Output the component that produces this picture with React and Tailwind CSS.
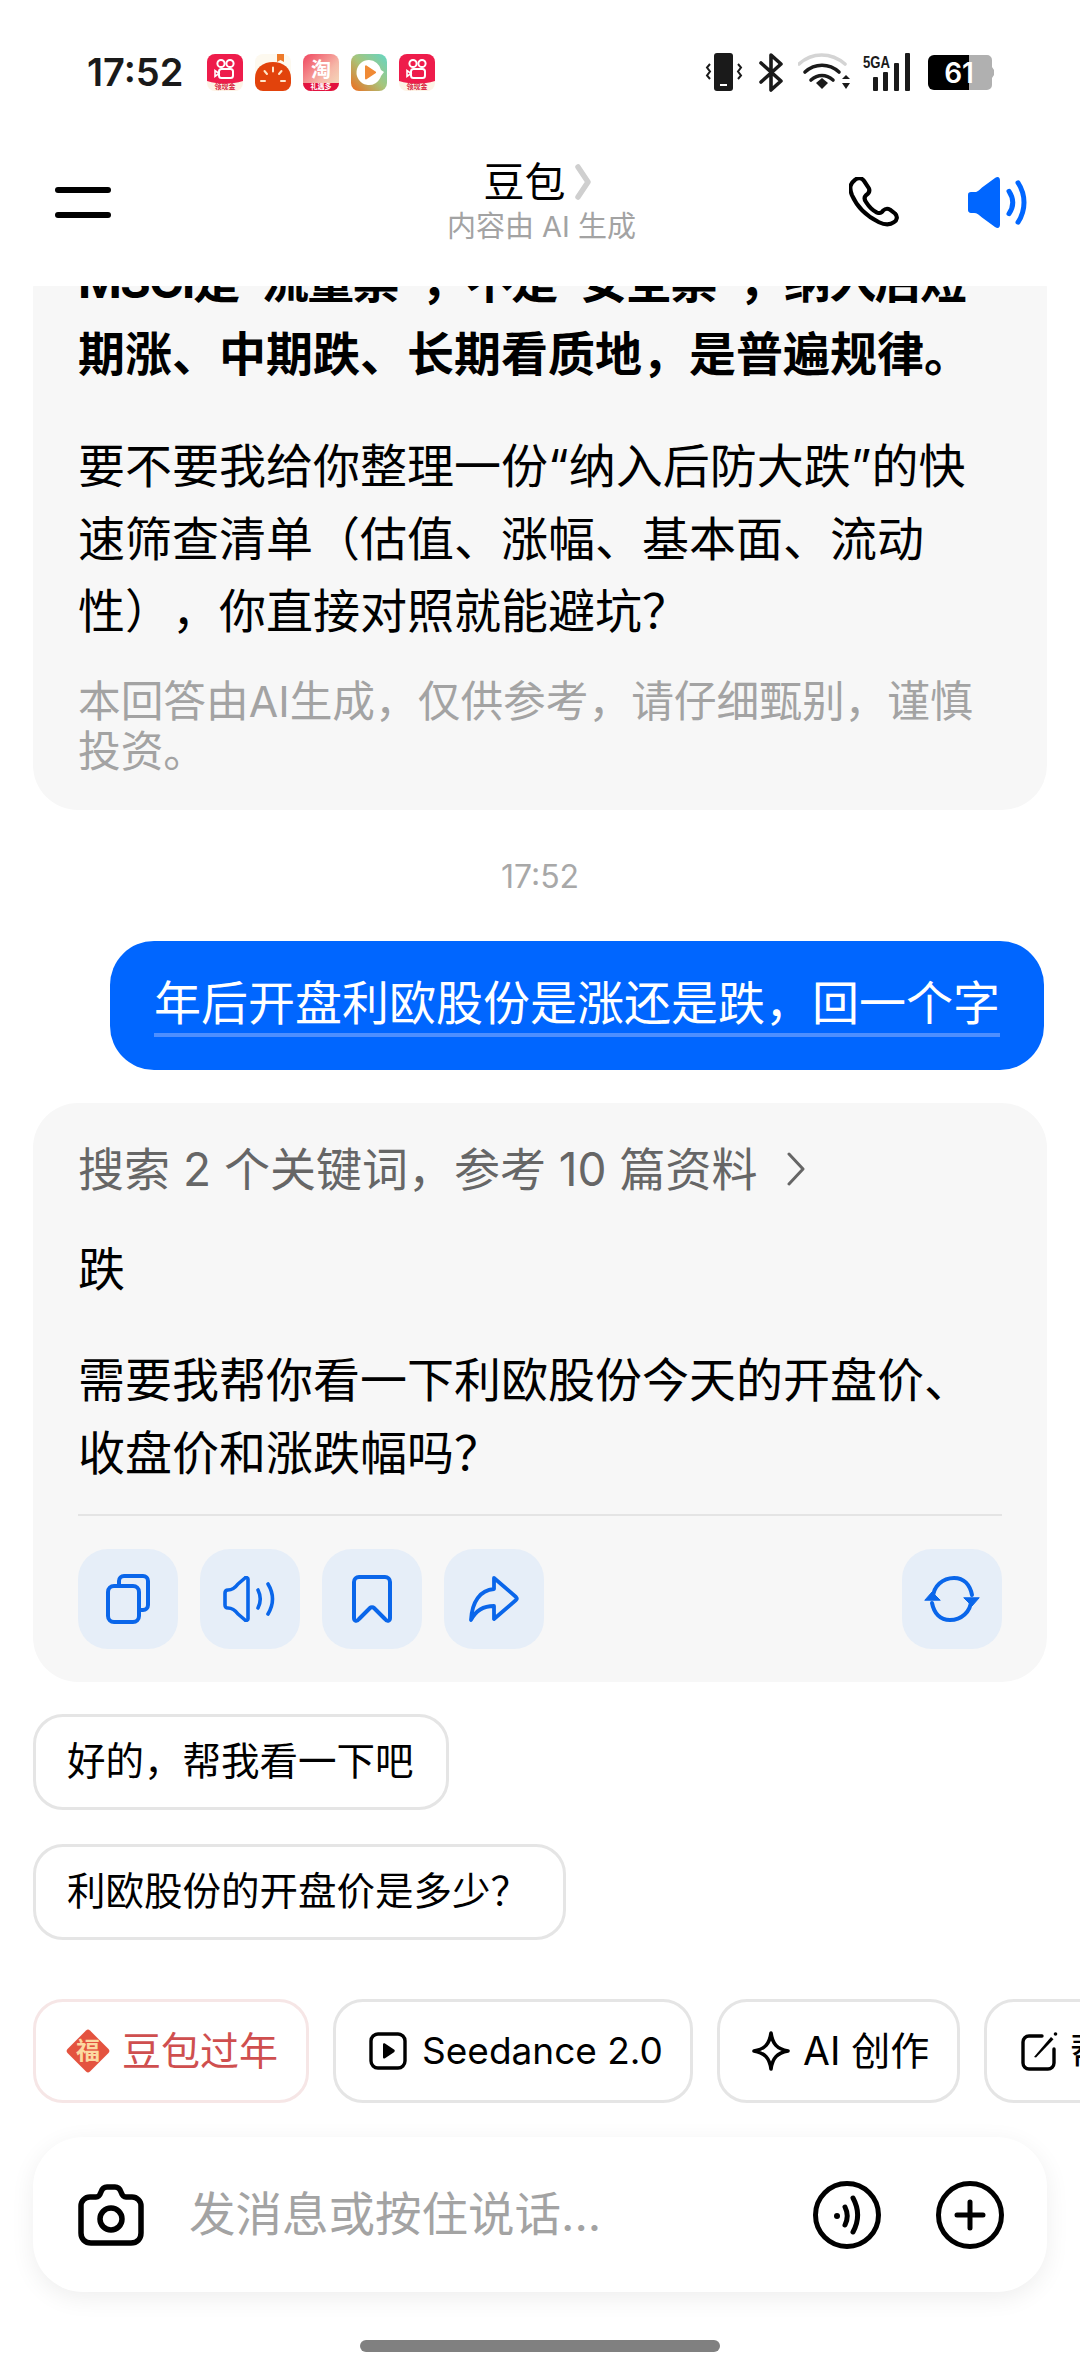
import React from 'react';

const KuaishouIcon = () => (
  <svg width="36" height="37" viewBox="0 0 36 37">
    <rect width="36" height="37" rx="8" fill="#fdf3e6" />
    <path d="M0 8a8 8 0 0 1 8-8h20a8 8 0 0 1 8 8v19c-6 2-12 2.500-18 2.500S6 29 0 27z" fill="#ee1c4b" />
    <circle cx="14" cy="9.500" r="3.600" fill="none" stroke="#fff" strokeWidth="2" />
    <circle cx="23" cy="9.500" r="3.600" fill="none" stroke="#fff" strokeWidth="2" />
    <rect x="12" y="15" width="14" height="9" rx="2.500" fill="none" stroke="#fff" strokeWidth="2" />
    <path d="M12 19.500l-4-3v6z" fill="none" stroke="#fff" strokeWidth="1.600" />
    <text x="18" y="35" textAnchor="middle" fontSize="7" fontWeight="700" fill="#d81e3f" fontFamily="'Noto Sans CJK SC', sans-serif">领现金</text>
  </svg>
);

const TomatoIcon = () => (
  <svg width="36" height="37" viewBox="0 0 36 37">
    <rect width="36" height="37" rx="8" fill="#fdf9ef" />
    <path d="M22 0h7v8l-3.500-2L22 8z" fill="#ee7a2a" />
    <path d="M0 24C0 14 8 8 18 8s18 6 18 16v5a8 8 0 0 1-8 8H8a8 8 0 0 1-8-8z" fill="#e2430c" />
    <path d="M18 13.500v4M9.500 17l2.500 3M26.500 17L24 20M6 27h4M26 27h4" stroke="#ffe6c9" strokeWidth="2" strokeLinecap="round" />
  </svg>
);

const TaobaoIcon = () => (
  <svg width="36" height="37" viewBox="0 0 36 37">
    <defs>
      <linearGradient id="tb" x1="0" y1="0" x2="1" y2="1">
        <stop offset="0" stopColor="#f0455f" />
        <stop offset="0.6" stopColor="#f6b7a8" />
        <stop offset="1" stopColor="#f3e3c0" />
      </linearGradient>
    </defs>
    <rect width="36" height="37" rx="8" fill="url(#tb)" />
    <path d="M0 29h36a8 8 0 0 1-8 8H8a8 8 0 0 1-8-8z" fill="#e2123f" />
    <text x="18" y="23" textAnchor="middle" fontSize="20" fontWeight="700" fill="#fff" fontFamily="'Noto Sans CJK SC', sans-serif">淘</text>
    <text x="18" y="35" textAnchor="middle" fontSize="7" fontWeight="700" fill="#fff" fontFamily="'Noto Sans CJK SC', sans-serif">礼遇多</text>
  </svg>
);

const VideoIcon = () => (
  <svg width="36" height="37" viewBox="0 0 36 37">
    <defs>
      <linearGradient id="vd" x1="1" y1="0" x2="0" y2="1">
        <stop offset="0" stopColor="#63d6c4" />
        <stop offset="0.5" stopColor="#a8c47a" />
        <stop offset="1" stopColor="#f06a1c" />
      </linearGradient>
    </defs>
    <rect width="36" height="37" rx="8" fill="url(#vd)" />
    <path d="M18 6a12.500 12.500 0 1 0 12 16l3-4-3-2A12.500 12.500 0 0 0 18 6z" fill="#fff" />
    <path d="M14 12.500a1 1 0 0 1 1.500-1l9 6a1 1 0 0 1 0 1.800l-9 6a1 1 0 0 1-1.500-1z" fill="#f08a35" />
  </svg>
);

const StatusIcons = () => (
  <div className="flex items-center">
    {/* vibrate */}
    <svg width="38" height="38" viewBox="0 0 38 38" className="mr-[16px]">
      <rect x="9" y="0" width="19" height="38" rx="3" fill="#1a1a1a" />
      <rect x="15" y="31" width="7" height="2" fill="#fff" />
      <path d="M5 11l-3 3.500 3 4-3 4 3 3.500M33 11l3 3.500-3 4 3 4-3 3.500" fill="none" stroke="#1a1a1a" strokeWidth="2" />
    </svg>
    {/* bluetooth */}
    <svg width="24" height="39" viewBox="0 0 24 39" className="mr-[15px]">
      <path d="M2 10l20 18-10 9V2l10 9L2 29" fill="none" stroke="#1a1a1a" strokeWidth="3.600" strokeLinejoin="round" strokeLinecap="round" />
    </svg>
    {/* wifi */}
    <svg width="52" height="38" viewBox="0 0 52 38" className="mr-[13px]">
      <path d="M1 11C14-1 33-1 47 11" fill="none" stroke="#d4d4d4" strokeWidth="3.600" strokeLinecap="round" />
      <path d="M7 19c10-9 24-9 34 0" fill="none" stroke="#1a1a1a" strokeWidth="3.600" strokeLinecap="round" />
      <path d="M13 27c7-6 15-6 22 0" fill="none" stroke="#1a1a1a" strokeWidth="3.600" strokeLinecap="round" />
      <path d="M18 30l6-5 6 5-6 6z" fill="#1a1a1a" />
      <path d="M44 26l4-4 4 4zM44 30l4 6 4-6z" fill="#1a1a1a" />
    </svg>
    {/* 5GA signal */}
    <svg width="48" height="38" viewBox="0 0 48 38" className="mr-[17px]">
      <text x="0" y="15" fontSize="16" fontWeight="700" fill="#1a1a1a" fontFamily="'Liberation Sans', sans-serif" textLength="27" lengthAdjust="spacingAndGlyphs">5GA</text>
      <rect x="10" y="24" width="5" height="14" rx="1" fill="#1a1a1a" />
      <rect x="20" y="19" width="5" height="19" rx="1" fill="#1a1a1a" />
      <rect x="31" y="10" width="5" height="28" rx="1" fill="#1a1a1a" />
      <rect x="42" y="0" width="5" height="38" rx="1" fill="#1a1a1a" />
    </svg>
    {/* battery */}
    <svg width="66" height="35" viewBox="0 0 66 35">
      <path d="M41 0h18a5 5 0 0 1 5 5v7l2 3v5l-2 3v7a5 5 0 0 1-5 5H41z" fill="#b0b0b0" />
      <path d="M6 0h35v35H6a6 6 0 0 1-6-6V6a6 6 0 0 1 6-6z" fill="#000" />
      <text x="31" y="28" textAnchor="middle" fontSize="28" fontWeight="600" fill="#fff" fontFamily="Inter, sans-serif">61</text>
    </svg>
  </div>
);

const PhoneIcon = () => (
  <svg width="50" height="50" viewBox="0 0 50 52" preserveAspectRatio="none">
    <path d="M6 3C9 0 13 1 15 4l5 8c1 3 0 5-3 7-2 2-2 4 0 7 3 5 7 9 11 11 3 1 5 0 6-2 2-2 4-3 7-1l5 4c3 3 2 7-1 9-4 3-9 3-15 0C18 41 8 31 3 19 0 11 1 7 6 3z" fill="none" stroke="#000" strokeWidth="4.200" strokeLinejoin="round" />
  </svg>
);

const SpeakerFilled = () => (
  <svg width="62" height="51" viewBox="0 0 62 54" preserveAspectRatio="none">
    <path d="M2 19c0-2 1-3 3-3h3c3 0 5-2 8-5l13-10c3-2 5-1 5 3v46c0 4-2 5-5 3L16 43c-3-3-5-5-8-5H5c-2 0-3-1-3-3z" fill="#0066ff" />
    <path d="M43 15c5 8 5 16 0 24M52 6c8 13 8 29 0 42" fill="none" stroke="#0066ff" strokeWidth="5" strokeLinecap="round" />
  </svg>
);

const CopyIcon = () => (
  <svg width="44" height="50" viewBox="0 0 44 50" fill="none" stroke="#0a66ea" strokeWidth="4">
    <path d="M13 11V7a5 5 0 0 1 5-5h19a5 5 0 0 1 5 5v24a5 5 0 0 1-5 5h-4" />
    <rect x="2" y="12" width="31" height="36" rx="6" />
  </svg>
);

const SpeakerOutline = () => (
  <svg width="54" height="46" viewBox="0 0 54 46" fill="none" stroke="#0a66ea" strokeWidth="3.600" strokeLinecap="round" strokeLinejoin="round">
    <path d="M2 17c0-2 1-3 3-3 4 0 7-2 10-6l7-6c1-1 3 0 3 1v40c0 1-2 2-3 1l-7-6c-3-4-6-6-10-6-2 0-3-1-3-3z" />
    <path d="M35 14c3 6 3 12 0 18M45 8c6 10 6 20 0 30" />
  </svg>
);

const BookmarkIcon = () => (
  <svg width="40" height="48" viewBox="0 0 40 48" fill="none" stroke="#0a66ea" strokeWidth="4" strokeLinejoin="round">
    <path d="M2 7a5 5 0 0 1 5-5h26a5 5 0 0 1 5 5v36c0 3-3 4-5 1l-11-11c-1-1-3-1-4 0L7 44c-2 3-5 2-5-1z" />
  </svg>
);

const ShareIcon = () => (
  <svg width="50" height="46" viewBox="0 0 50 46" fill="none" stroke="#0a66ea" strokeWidth="3.800" strokeLinejoin="round" strokeLinecap="round">
    <path d="M25 2l22 19c1 1 1 2 0 3L25 43V30C14 30 7 34 2 44 3 26 11 14 25 13z" />
  </svg>
);

const RefreshIcon = () => (
  <svg width="56" height="46" viewBox="0 0 56 46" fill="none" stroke="#0a66ea" strokeWidth="4" strokeLinecap="round">
    <path d="M9 22C9 10 19 2 30 2c10 0 16 7 18 17" />
    <path d="M47 24c0 12-10 20-21 20-10 0-16-7-18-17" />
    <path d="M1 24l7-8 8 8zM40 22l8 8 7-8z" fill="#0a66ea" strokeWidth="1" strokeLinejoin="round" />
  </svg>
);

const FuIcon = () => (
  <svg width="44" height="44" viewBox="0 0 44 45" preserveAspectRatio="none">
    <path d="M20 1.500a3 3 0 0 1 4 0l18.500 19a3 3 0 0 1 0 4L24 43.500a3 3 0 0 1-4 0L1.500 24.500a3 3 0 0 1 0-4z" fill="#e4533f" />
    <text x="22" y="31" textAnchor="middle" fontSize="24" fontWeight="700" fill="#fbd9a0" fontFamily="'Noto Sans CJK SC', serif">福</text>
  </svg>
);

const PlayBoxIcon = () => (
  <svg width="38" height="38" viewBox="0 0 38 38" fill="none">
    <rect x="2" y="2" width="34" height="34" rx="7" stroke="#000" strokeWidth="3.400" />
    <path d="M14 12.500c0-1 1-1.500 2-1l9 6c1 .6 1 2 0 2.800l-9 6c-1 .6-2 0-2-1z" fill="#000" />
  </svg>
);

const SparkleIcon = () => (
  <svg width="40" height="42" viewBox="0 0 40 42" fill="none">
    <path d="M20 3c1.500 11 6 16 17 18-11 2-15.500 7-17 18-1.500-11-6-16-17-18 11-2 15.500-7 17-18z" stroke="#000" strokeWidth="3.600" strokeLinejoin="round" />
  </svg>
);

const EditIcon = () => (
  <svg width="37" height="39" viewBox="0 0 37 39" fill="none">
    <path d="M21 4H8a6 6 0 0 0-6 6v21a6 6 0 0 0 6 6h19a6 6 0 0 0 6-6V17" stroke="#000" strokeWidth="3.400" strokeLinecap="round" />
    <path d="M13 25L30 5l2.500 2.200L15 25.500z" fill="#000" />
    <circle cx="34.500" cy="2" r="1.800" fill="#000" />
  </svg>
);

const CameraIcon = () => (
  <svg width="66" height="62" viewBox="0 0 66 62" fill="none" stroke="#000" strokeWidth="5.500" strokeLinejoin="round">
    <path d="M12 13h6c3 0 4-2 5-5 1-3 3-5 6-5h8c3 0 5 2 6 5 1 3 2 5 5 5h6c5 0 9 4 9 9v27c0 6-4 10-10 10H13C7 59 3 55 3 49V22c0-5 4-9 9-9z" />
    <circle cx="33" cy="35" r="11" />
  </svg>
);

const VoiceIcon = () => (
  <svg width="68" height="68" viewBox="0 0 68 68" fill="none" stroke="#000" strokeWidth="5" strokeLinecap="round">
    <circle cx="34" cy="34" r="31.500" />
    <circle cx="24" cy="35" r="3" fill="#000" stroke="none" />
    <path d="M32 26c3 6 3 12 0 18" />
    <path d="M40 17c6 11 6 23 0 34" />
  </svg>
);

const PlusCircleIcon = () => (
  <svg width="68" height="68" viewBox="0 0 68 68" fill="none" stroke="#000" strokeWidth="5" strokeLinecap="round">
    <circle cx="34" cy="34" r="31.500" />
    <path d="M34 21v26M21 34h26" />
  </svg>
);

const actionBtn = 'w-[100px] h-[100px] rounded-[30px] bg-[#e6eef8] flex items-center justify-center';

export default function App() {
  return (
    <div className="w-[1080px] h-[2373px] overflow-hidden bg-white flex flex-col text-black [text-spacing-trim:space-all] font-['Inter','Noto_Sans_CJK_SC',sans-serif]">
      {/* Status bar */}
      <div className="h-[144px] shrink-0 pl-[87px] pr-[86px] flex items-center justify-between">
        <div className="flex items-center">
          <span className="text-[38px] font-semibold text-[#1a1a1a] w-[120px]">17:52</span>
          <div className="flex items-center gap-[12px]">
            <KuaishouIcon />
            <TomatoIcon />
            <TaobaoIcon />
            <VideoIcon />
            <KuaishouIcon />
          </div>
        </div>
        <StatusIcons />
      </div>

      {/* Header */}
      <header className="h-[142px] shrink-0 pb-[26px] pl-[55px] pr-[52px] grid grid-cols-3 items-center relative z-10 bg-white">
        <div className="flex flex-col gap-[19px] w-[56px]">
          <div className="h-[6px] rounded-full bg-black" />
          <div className="h-[6px] rounded-full bg-black" />
        </div>
        <div className="flex flex-col items-center">
          <div className="flex items-center h-[50px] -ml-[8px]">
            <span className="text-[41px] leading-[50px]">豆包</span>
            <svg width="16" height="36" viewBox="0 0 16 36" className="ml-[10px]">
              <path d="M3 3l10 15L3 33" fill="none" stroke="#cfcfcf" strokeWidth="5.500" strokeLinecap="round" strokeLinejoin="round" />
            </svg>
          </div>
          <span className="text-[29px] leading-[40px] text-[#a3a3a3] whitespace-nowrap">内容由 AI 生成</span>
        </div>
        <div className="flex items-center justify-end gap-[67px]">
          <PhoneIcon />
          <SpeakerFilled />
        </div>
      </header>

      {/* Chat */}
      <main className="flex-1 min-h-0 overflow-hidden">
        <div className="-mt-[41px] mx-[33px] bg-[#f7f7f7] rounded-[45px] px-[45px] pb-[33px]">
          <p className="text-[47px] leading-[72.6px] font-bold whitespace-nowrap"><span className="tracking-[-1.800px]">MSCI是“流量票”，不是“安全票”，纳入后短</span><br />期涨、中期跌、长期看质地，是普遍规律。</p>
          <p className="mt-[40px] text-[47px] leading-[72.6px] whitespace-nowrap">要不要我给你整理一份“纳入后防大跌”的快<br />速筛查清单（估值、涨幅、基本面、流动<br />性），你直接对照就能避坑？</p>
          <p className="mt-[29px] text-[42.700px] leading-[50px] text-[#a3a3a3] whitespace-nowrap">本回答由AI生成，仅供参考，请仔细甄别，谨慎<br />投资。</p>
        </div>

        <div className="mt-[47px] text-center text-[32px] leading-[40px] text-[#a8a8a8]">17:52</div>

        <div className="mt-[44px] ml-[110px] mr-[36px] h-[129px] bg-[#0066ff] rounded-[44px] flex items-center justify-center">
          <span className="text-[47px] leading-[60px] text-white border-b-[4px] border-[#4d8fff] whitespace-nowrap">年后开盘利欧股份是涨还是跌，回一个字</span>
        </div>

        <div className="mt-[33px] mx-[33px] bg-[#f7f7f7] rounded-[45px] px-[45px] pt-[29px] pb-[33px]">
          <div className="flex items-center h-[72px] pt-[3px] text-[46px] text-[#666666]">
            <span>搜索 2 个关键词，参考 10 篇资料</span>
            <svg width="20" height="34" viewBox="0 0 20 34" className="ml-[28px]">
              <path d="M3 2l14 15L3 32" fill="none" stroke="#666666" strokeWidth="3" strokeLinecap="round" strokeLinejoin="round" />
            </svg>
          </div>
          <p className="mt-[28px] text-[47px] leading-[73px]">跌</p>
          <p className="mt-[39px] text-[47px] leading-[72.6px] whitespace-nowrap">需要我帮你看一下利欧股份今天的开盘价、<br />收盘价和涨跌幅吗？</p>
          <div className="mt-[25px] h-[2px] bg-[#e4e4e4]" />
          <div className="mt-[33px] flex items-center">
            <div className="flex gap-[22px]">
              <div className={actionBtn}><CopyIcon /></div>
              <div className={actionBtn}><SpeakerOutline /></div>
              <div className={actionBtn}><BookmarkIcon /></div>
              <div className={actionBtn}><ShareIcon /></div>
            </div>
            <div className={`${actionBtn} ml-auto`}><RefreshIcon /></div>
          </div>
        </div>

        <div className="mt-[32px] ml-[33px] flex flex-col items-start gap-[34px]">
          <div className="h-[96px] w-[416px] rounded-[30px] border-[3px] border-[#e5e5e5] flex items-center pl-[31px] text-[38.500px]">好的，帮我看一下吧</div>
          <div className="h-[96px] w-[533px] rounded-[30px] border-[3px] border-[#e5e5e5] flex items-center pl-[31px] text-[38.500px]">利欧股份的开盘价是多少？</div>
        </div>
      </main>

      {/* Shortcut chips */}
      <div className="h-[104px] shrink-0 pl-[33px] flex gap-[24px] overflow-hidden text-[39px]">
        <div className="w-[276px] shrink-0 rounded-[30px] border-[3px] border-[#f6e6e6] flex items-center pl-[30px] gap-[12px] text-[#cf4f4f]">
          <FuIcon />
          <span>豆包过年</span>
        </div>
        <div className="w-[360px] shrink-0 rounded-[30px] border-[3px] border-[#e5e5e5] flex items-center pl-[33px] gap-[15px]">
          <PlayBoxIcon />
          <span className="text-[37px]">Seedance 2.0</span>
        </div>
        <div className="w-[243px] shrink-0 rounded-[30px] border-[3px] border-[#e5e5e5] flex items-center pl-[31px] gap-[12px]">
          <SparkleIcon />
          <span>AI 创作</span>
        </div>
        <div className="w-[300px] shrink-0 rounded-[30px] border-[3px] border-[#e5e5e5] flex items-center pl-[34px] gap-[12px]">
          <EditIcon />
          <span className="whitespace-nowrap">帮我写作</span>
        </div>
      </div>

      {/* Input */}
      <div className="mt-[34px] mx-[33px] h-[155px] shrink-0 rounded-[50px] bg-white shadow-[0_6px_24px_rgba(0,0,0,0.07)] flex items-center pl-[45px] pr-[43px]">
        <CameraIcon />
        <span className="ml-[45px] text-[46.500px] text-[#a3a3a3]">发消息或按住说话...</span>
        <div className="ml-auto flex items-center gap-[55px]">
          <VoiceIcon />
          <PlusCircleIcon />
        </div>
      </div>

      {/* Home indicator */}
      <div className="mt-[48px] mb-[21px] mx-auto w-[360px] h-[12px] rounded-full bg-[#808080] shrink-0" />
    </div>
  );
}
